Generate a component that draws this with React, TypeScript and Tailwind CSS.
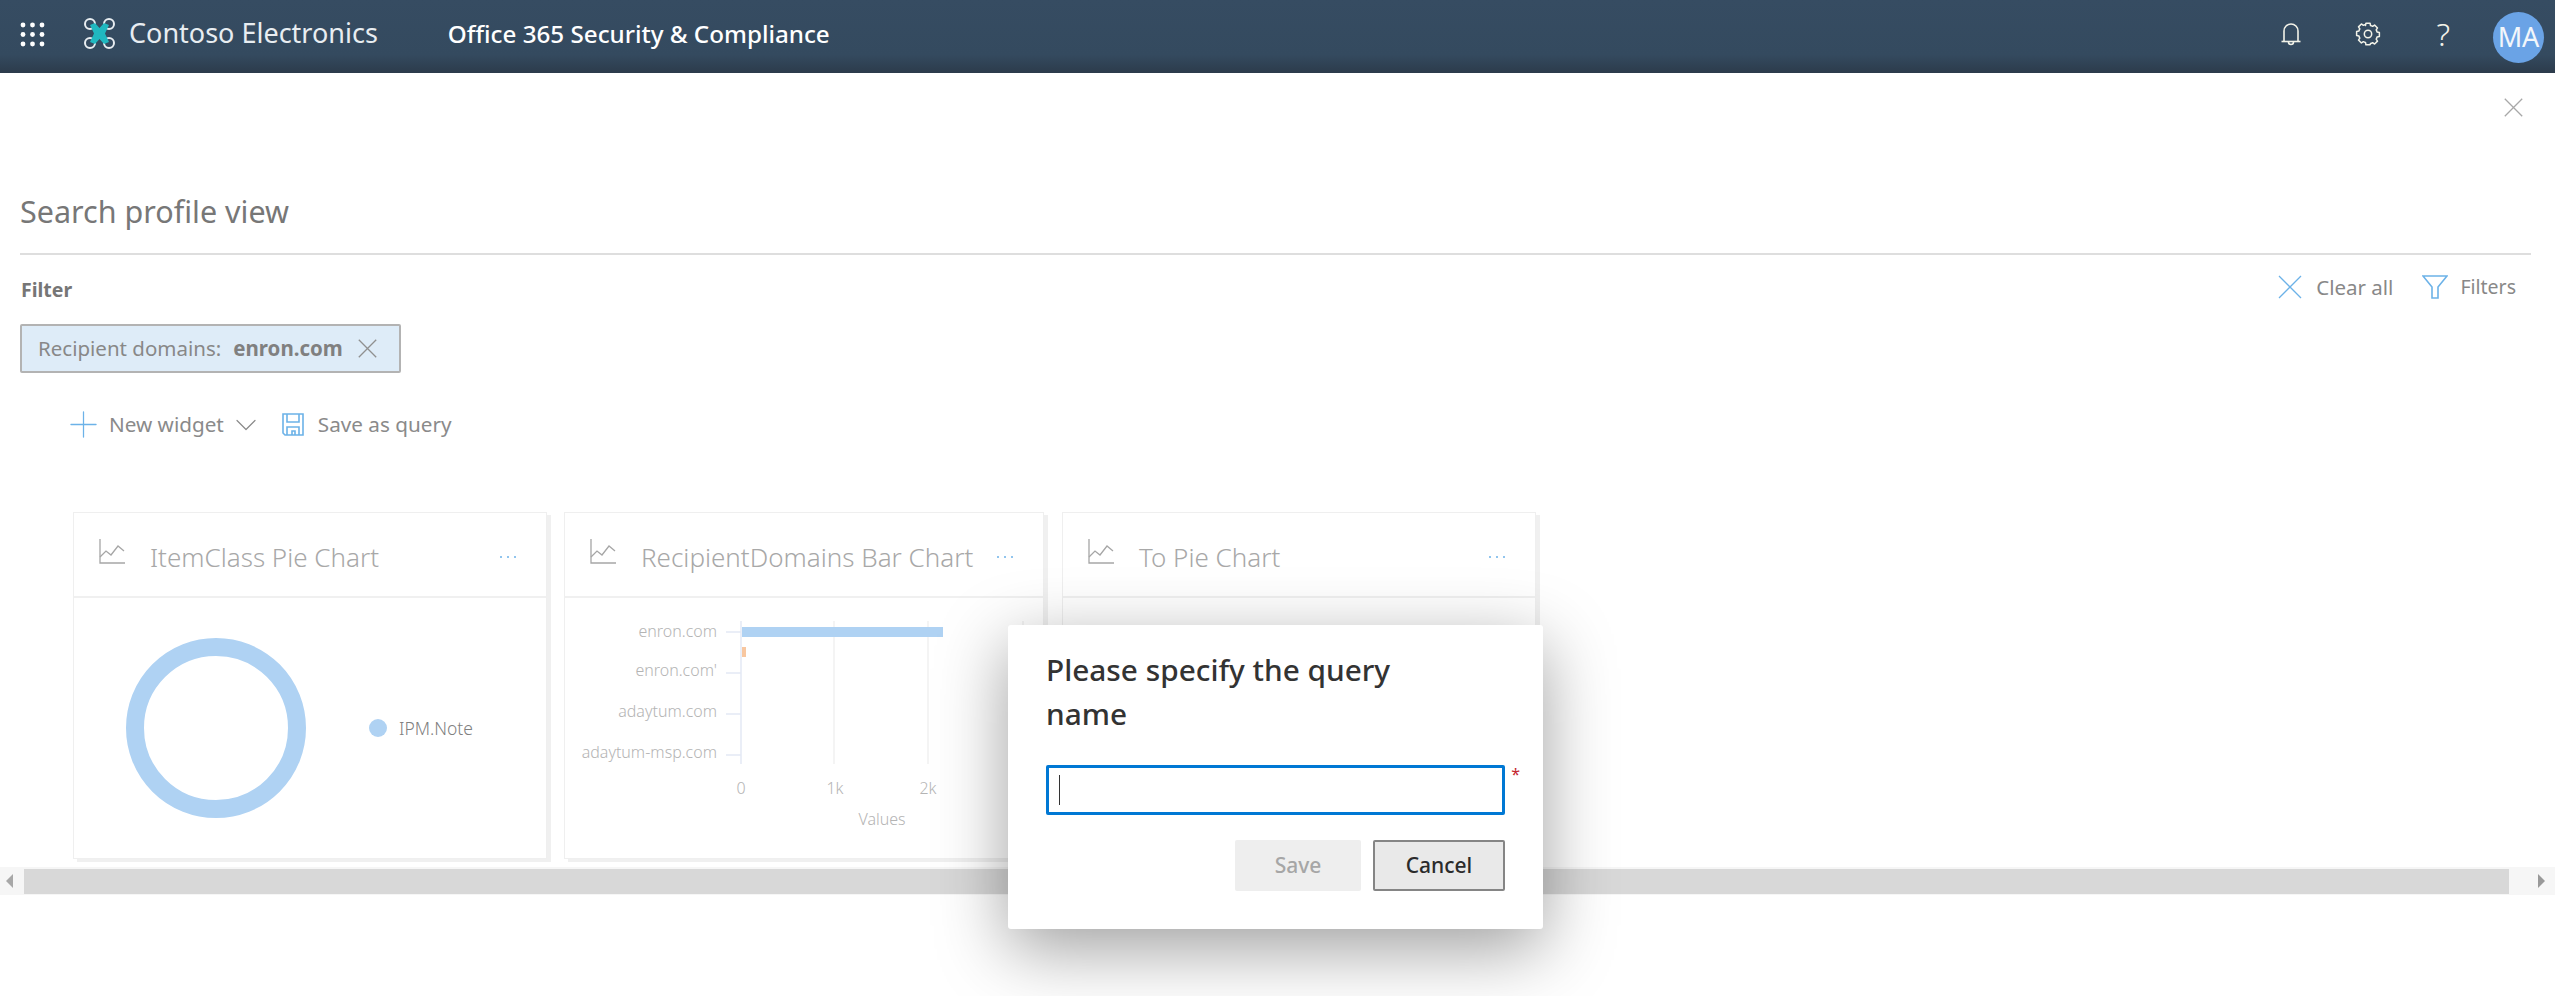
import React from 'react';
import { ChevronDown, Plus } from 'lucide-react';

const font = "font-['Noto_Sans','Open_Sans',sans-serif]";

function GridIcon() {
  const cells = [0, 1, 2];
  return (
    <svg width="25" height="25" viewBox="0 0 25 25" fill="#fff">
      {cells.map(r => cells.map(c => <circle key={`${r}${c}`} cx={3 + c * 9.5} cy={3 + r * 9.5} r="2.4" />))}
    </svg>
  );
}

function Logo() {
  return (
    <svg width="33" height="33" viewBox="0 0 33 33" fill="none">
      <g stroke="#e8edf1" strokeWidth="2">
        <circle cx="7" cy="7" r="5" />
        <circle cx="26" cy="7" r="5" />
        <circle cx="7" cy="26" r="5" />
        <circle cx="26" cy="26" r="5" />
      </g>
      <path d="M7 8 L12 6 L16.5 11 L21 6 L26 8 L22 16.5 L26 25 L21 27 L16.5 22 L12 27 L7 25 L11 16.5 Z" fill="#20b8c0" />
    </svg>
  );
}

function BellIcon() {
  return (
    <svg width="20" height="24" viewBox="0 0 20 24" fill="none" stroke="#f2f2e8" strokeWidth="1.6">
      <path d="M3 19V9a7 7 0 0 1 14 0v10" />
      <path d="M0.5 19.5h19" />
      <path d="M7.5 20a2.5 2.5 0 0 0 5 0" />
    </svg>
  );
}

function GearIcon() {
  return (
    <svg width="26" height="26" viewBox="0 0 24 24" fill="none" stroke="#f2f2e8" strokeWidth="1.4" strokeLinejoin="round">
      <path d="M9.67 4.14l.43-2.14h3.8l.43 2.14a8 8 0 0 1 1.93.8l1.82-1.21 2.69 2.69-1.21 1.82a8 8 0 0 1 .8 1.93l2.14.43v3.8l-2.14.43a8 8 0 0 1-.8 1.93l1.21 1.82-2.69 2.69-1.82-1.21a8 8 0 0 1-1.93.8L13.9 22h-3.8l-.43-2.14a8 8 0 0 1-1.93-.8l-1.82 1.21-2.69-2.69 1.21-1.82a8 8 0 0 1-.8-1.93L1.5 13.4V9.6l2.14-.43a8 8 0 0 1 .8-1.93L3.23 5.42l2.69-2.69 1.82 1.21a8 8 0 0 1 1.93-.8z" />
      <circle cx="12" cy="12" r="3.4" />
    </svg>
  );
}

function ThinX({ size, color }: { size: number; color: string }) {
  return (
    <svg width={size} height={size} viewBox="0 0 24 24" fill="none" stroke={color} strokeWidth={24 / size * 1.3}>
      <path d="M1 1l22 22M23 1L1 23" />
    </svg>
  );
}

function FilterIcon() {
  return (
    <svg width="26" height="24" viewBox="0 0 26 24" fill="none" stroke="#6cb2e8" strokeWidth="1.6">
      <path d="M1 1h24l-9 11v11h-6V12z" />
    </svg>
  );
}

function SaveIcon() {
  return (
    <svg width="22" height="23" viewBox="0 0 22 23" fill="none" stroke="#6cb2e8" strokeWidth="1.6">
      <path d="M1 1h20v21H3l-2-2z" />
      <path d="M5 1v8h12V1" />
      <path d="M5 22v-8h12v8" />
      <path d="M10 22v-4h3v4" />
    </svg>
  );
}

function ChartIcon() {
  return (
    <svg width="26" height="25" viewBox="0 0 26 25" fill="none" stroke="#a6a6a6" strokeWidth="1.3">
      <path d="M1 0v24h25" />
      <path d="M1 18l6-6 5 4 7-9 6 5" />
    </svg>
  );
}

function Card({ title, width, children }: { title: string; width: string; children?: React.ReactNode }) {
  return (
    <div className={`${width} h-[347px] flex flex-col bg-white border border-[#efefef] shadow-[4px_3px_0_#f0f0f0]`}>
      <div className="h-[85px] flex items-center pl-[25px] pr-[30px] border-b-2 border-[#f0f0f0] shrink-0">
        <span className="mb-[6px]"><ChartIcon /></span>
        <span className="ml-[25px] mt-[5px] text-[26px] font-light text-[#a8a8a8] whitespace-nowrap">{title}</span>
        <span className="ml-auto flex gap-[5px] pt-[4px]">
          <i className="w-[2px] h-[2px] rounded-full bg-[#6cb2e8]" />
          <i className="w-[2px] h-[2px] rounded-full bg-[#6cb2e8]" />
          <i className="w-[2px] h-[2px] rounded-full bg-[#6cb2e8]" />
        </span>
      </div>
      {children}
    </div>
  );
}

function BarChart() {
  const labels = [
    ['enron.com', 633, 633],
    ["enron.com'", 672, 674],
    ['adaytum.com', 713, 715],
    ['adaytum-msp.com', 754, 756],
  ] as const;
  // svg origin is the card body corner (565, 599)
  return (
    <svg width="478" height="258" viewBox="565 599 478 258" fontFamily="Noto Sans, sans-serif" fontWeight="300" fontSize="16" fill="#b4b4b4">
      {[834, 928, 1023].map(x => <line key={x} x1={x} x2={x} y1="622" y2="765" stroke="#f0f0f0" strokeWidth="1.5" />)}
      <line x1="741" x2="741" y1="622" y2="765" stroke="#e3e9f5" strokeWidth="1.5" />
      {labels.map(([t, y, tick]) => (
        <g key={t}>
          <text x="717" y={y + 5} textAnchor="end">{t}</text>
          <line x1="726" x2="741" y1={tick} y2={tick} stroke="#e3e9f5" strokeWidth="1.5" />
        </g>
      ))}
      <rect x="742" y="628" width="201" height="10" fill="#afd2f3" />
      <rect x="742" y="648" width="4" height="10" fill="#f8c7a0" />
      <text x="741" y="795" textAnchor="middle">0</text>
      <text x="835" y="795" textAnchor="middle">1k</text>
      <text x="928" y="795" textAnchor="middle">2k</text>
      <text x="1023" y="795" textAnchor="middle">3k</text>
      <text x="882" y="826" textAnchor="middle">Values</text>
    </svg>
  );
}

export default function App() {
  return (
    <div className={`relative h-[996px] overflow-hidden bg-white ${font}`}>
      <header className="h-[73px] flex items-center text-white bg-[linear-gradient(#364c62_0%,#344a5f_75%,#2c3b4b_100%)]">
        <div className="ml-[20px] w-[25px] h-[25px] mb-[4px]"><GridIcon /></div>
        <div className="ml-[38px] mb-[6px]"><Logo /></div>
        <span className="ml-[13px] text-[27px] text-[#e8edf1] mb-[7px] whitespace-nowrap">Contoso Electronics</span>
        <span className="ml-[70px] text-[24.2px] font-medium mb-[5px] whitespace-nowrap">Office 365 Security &amp; Compliance</span>
        <div className="ml-auto flex items-center">
          <div className="mr-[54px] mb-[6px]"><BellIcon /></div>
          <div className="mr-[55px] mb-[6px]"><GearIcon /></div>
          <div className="mr-[43px] mb-[5px] text-[32px] leading-none font-light text-[#f2f2e8]">?</div>
          <div className="mr-[11px] mt-[1px] w-[51px] h-[51px] rounded-full bg-[#6aa3e6] flex items-center justify-center text-[27px] text-[#f2f6fb]">MA</div>
        </div>
      </header>

      <main>
        <div className="flex justify-end pt-[25px] pr-[32px] h-[44px]"><ThinX size={19} color="#a8a8a8" /></div>

        <div className="ml-[20px] mr-[24px]">
          <h1 className="mt-[73px] h-[42px] leading-[42px] text-[30.5px] text-[#777]">Search profile view</h1>
          <div className="mt-[21px] border-t-2 border-[#dedede]" />
          <div className="mt-[20px] h-[30px] flex items-center text-[#888]">
            <span className="text-[19.5px] font-bold text-[#767676] ml-[1px]">Filter</span>
            <div className="ml-auto flex items-center text-[20.5px] pr-[15px] mb-[6px]">
              <ThinX size={24} color="#6cb2e8" />
              <span className="ml-[14px]">Clear all</span>
              <span className="ml-[29px]"><FilterIcon /></span>
              <span className="ml-[12px] text-[19.5px]">Filters</span>
            </div>
          </div>
          <div className="mt-[19px] w-[381px] h-[49px] flex items-center pl-[16px] bg-[#deecf8] border-2 border-[#b3b3b3] rounded-[2px] text-[20.5px] text-[#888]">
            <span className="whitespace-nowrap">Recipient domains:</span>
            <b className="ml-[12px] font-bold text-[#808080]">enron.com</b>
            <span className="ml-[15px]"><ThinX size={19} color="#909090" /></span>
          </div>
        </div>

        <div className="mt-[39px] ml-[71px] h-[25px] flex items-center text-[20.7px] text-[#8a8a8a]">
          <Plus size={43} strokeWidth={0.7} color="#6cb2e8" className="-mx-[9px]" />
          <span className="ml-[13px] whitespace-nowrap">New widget</span>
          <ChevronDown size={36} strokeWidth={0.8} color="#8a8a8a" className="ml-[4px]" />
          <span className="ml-[18px]"><SaveIcon /></span>
          <span className="ml-[14px] whitespace-nowrap">Save as query</span>
        </div>

        <div className="mt-[75px] ml-[73px] flex">
          <Card title="ItemClass Pie Chart" width="w-[474px]">
            <div className="flex-1 flex items-center pl-[52px]">
              <div className="w-[180px] h-[180px] rounded-full border-[18px] border-[#afd2f3]" />
              <span className="ml-[63px] w-[18px] h-[18px] rounded-full bg-[#afd2f3]" />
              <span className="ml-[12px] text-[17.5px] font-light text-[#808080]">IPM.Note</span>
            </div>
          </Card>
          <div className="ml-[17px]">
            <Card title="RecipientDomains Bar Chart" width="w-[480px]">
              <BarChart />
            </Card>
          </div>
          <div className="ml-[18px]">
            <Card title="To Pie Chart" width="w-[474px]" />
          </div>
        </div>

        <div className="mt-[8px] h-[28px] flex items-center bg-[#f6f6f6]">
          <div className="w-[24px] flex justify-start pl-[6px]">
            <div className="w-0 h-0 border-y-[7px] border-y-transparent border-r-[7px] border-r-[#a8a8a8]" />
          </div>
          <div className="flex-1 h-[25px] bg-[#d8d8d8]" />
          <div className="w-[46px] flex justify-end pr-[10px]">
            <div className="w-0 h-0 border-y-[7px] border-y-transparent border-l-[7px] border-l-[#999]" />
          </div>
        </div>
      </main>

      <div className="absolute left-[1008px] top-[625px] w-[535px] h-[304px] bg-white rounded-[3px] shadow-[0_20px_70px_rgba(0,0,0,0.38)] pt-[23px] pl-[38px] pr-[38px]">
        <h2 className="w-[380px] text-[29.8px] leading-[44px] font-medium text-[#333]">Please specify the query name</h2>
        <div className="relative mt-[29px] h-[50px] border-[3px] border-[#0078d4] rounded-[2px] bg-white flex items-center pl-[10px]">
          <div className="w-[1px] h-[30px] bg-[#333]" />
          <span className="absolute -right-[18px] -top-[6px] text-[16px] text-[#c4262e]">*</span>
        </div>
        <div className="mt-[25px] flex justify-end gap-[12px]">
          <button className="w-[126px] h-[51px] rounded-[2px] bg-[#eeeeee] text-[21px] font-medium text-[#a6a6a6]">Save</button>
          <button className="w-[132px] h-[51px] rounded-[2px] bg-[#e9e9e9] border-2 border-[#858585] text-[21px] font-medium text-[#2b2b2b]">Cancel</button>
        </div>
      </div>
    </div>
  );
}
